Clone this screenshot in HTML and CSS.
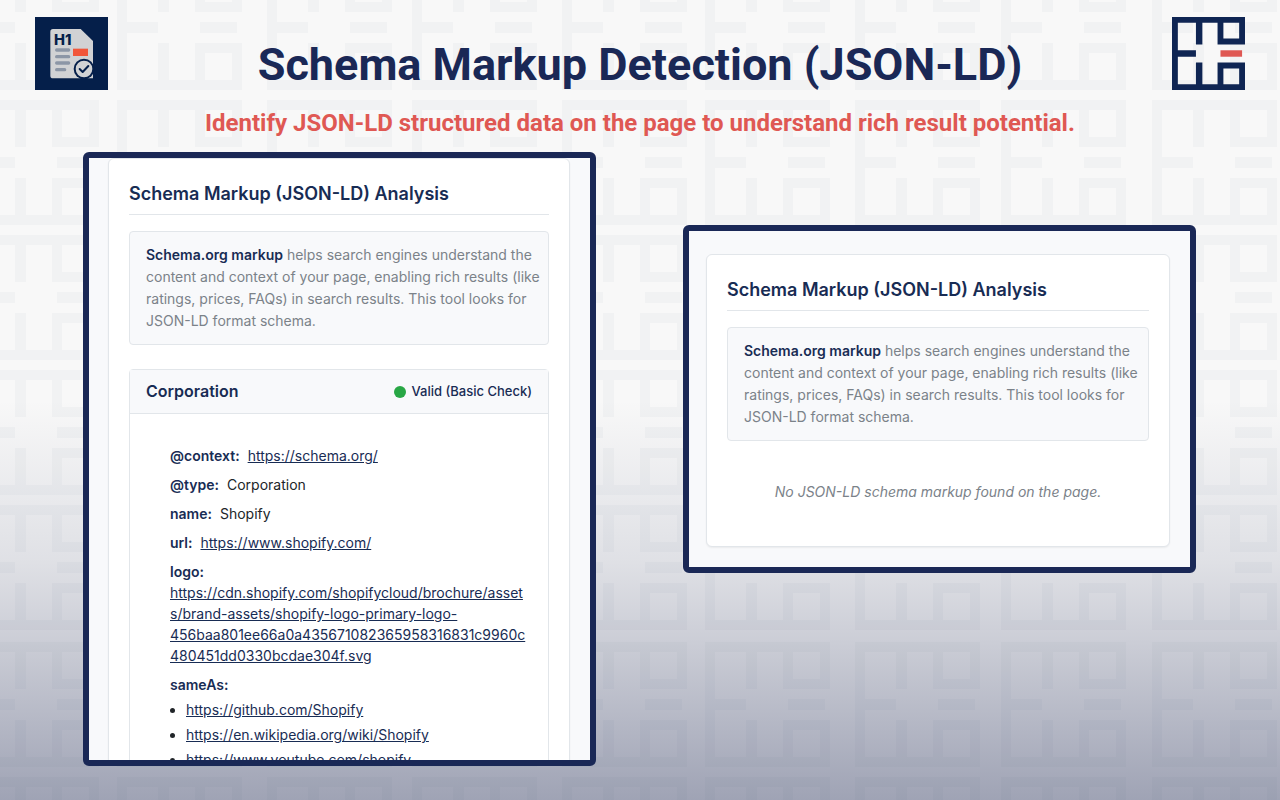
FILE: index.html
```html
<!doctype html>
<html lang="en">
    <head>
        <meta charset="UTF-8" />
        <meta name="viewport" content="width=device-width, initial-scale=1.0" />
        <title>Schema Markup Detection (JSON-LD)</title>
        <link rel="stylesheet" href="styles.css">
    </head>
    <body>
        <!-- Background pattern -->
        <svg class="backdrop" width="100%" height="100%" aria-hidden="true">
            <defs>
                <symbol id="mark" viewBox="0 0 125 125">
                    <path
                        fill-rule="evenodd"
                        d="M0 0H125V47H78V10H52V47H41V10H10V57H41V68H10V115H41V78H52V115H78V78H125V125H0ZM88 10V37H115V10ZM88 88V115H115V88Z"
                    />
                    <rect class="mark-accent" x="83" y="57" width="37" height="11" />
                </symbol>
                <pattern id="tiles" x="-26" y="-35" width="1321" height="947" patternUnits="userSpaceOnUse">
                    <g id="row">
                        <use href="#mark" x="0" width="125" height="125" />
                        <use href="#mark" x="143" width="125" height="125" />
                        <use href="#mark" x="293" width="125" height="125" />
                        <use href="#mark" x="438" width="125" height="125" />
                        <use href="#mark" x="588" width="125" height="125" />
                        <use href="#mark" x="731" width="125" height="125" />
                        <use href="#mark" x="881" width="125" height="125" />
                        <use href="#mark" x="1027" width="125" height="125" />
                        <use href="#mark" x="1178" width="125" height="125" />
                    </g>
                    <use href="#row" y="135" />
                    <use href="#row" y="270" />
                    <use href="#row" y="405" />
                    <use href="#row" y="540" />
                    <use href="#row" y="677" />
                    <use href="#row" y="812" />
                </pattern>
            </defs>
            <rect width="100%" height="100%" fill="url(#tiles)" />
        </svg>

        <header class="page-header">
            <svg class="logo" viewBox="0 0 219 219" role="img" aria-label="H1 checker">
                <rect width="219" height="219" fill="#051f4a" />
                <path d="M54 36H137L174 72V184H54Q46 184 46 176V44Q46 36 54 36Z" fill="#d1d2d4" />
                <text class="logo-text" x="57" y="84">H1</text>
                <g stroke="#8c96a6" stroke-width="10" stroke-linecap="round">
                    <path d="M65 99H101M65 119H101M65 138H101M65 158H89" />
                </g>
                <rect x="114" y="95" width="45" height="22" fill="#f1563a" />
                <circle cx="147" cy="156" r="31" fill="#051f4a" />
                <circle cx="147" cy="156" r="25" fill="#d1d2d4" />
                <path d="M134 156L143 165L160 147" fill="none" stroke="#051f4a" stroke-width="6" stroke-linecap="round" stroke-linejoin="round" />
            </svg>
            <div class="titles">
                <h1>Schema Markup Detection (JSON-LD)</h1>
                <p>Identify JSON-LD structured data on the page to understand rich result potential.</p>
            </div>
            <svg class="logo brand" role="img" aria-label="Brand">
                <use href="#mark" width="100%" height="100%" />
            </svg>
        </header>

        <main class="screens">
            <section class="screen screen-result">
                <div class="card">
                    <h2>Schema Markup (JSON-LD) Analysis</h2>
                    <p class="info">
                        <strong>Schema.org markup</strong> helps search engines
                        understand the content and context of your page,
                        enabling rich results (like ratings, prices, FAQs) in
                        search results. This tool looks for JSON-LD format
                        schema.
                    </p>
                    <div class="schema">
                        <div class="schema-header">
                            <h3>Corporation</h3>
                            <span class="status">Valid (Basic Check)</span>
                        </div>
                        <div class="schema-body">
                            <div class="prop"><strong>@context:</strong> <a href="https://schema.org/">https://schema.org/</a></div>
                            <div class="prop"><strong>@type:</strong> <span>Corporation</span></div>
                            <div class="prop"><strong>name:</strong> <span>Shopify</span></div>
                            <div class="prop"><strong>url:</strong> <a href="https://www.shopify.com/">https://www.shopify.com/</a></div>
                            <div class="prop"><strong>logo:</strong> <a href="https://cdn.shopify.com/shopifycloud/brochure/assets/brand-assets/shopify-logo-primary-logo-456baa801ee66a0a435671082365958316831c9960c480451dd0330bcdae304f.svg">https://cdn.shopify.com/shopifycloud/brochure/assets/brand-assets/shopify-logo-primary-logo-456baa801ee66a0a435671082365958316831c9960c480451dd0330bcdae304f.svg</a></div>
                            <div class="prop">
                                <strong>sameAs:</strong>
                                <ul>
                                    <li><a href="https://github.com/Shopify">https://github.com/Shopify</a></li>
                                    <li><a href="https://en.wikipedia.org/wiki/Shopify">https://en.wikipedia.org/wiki/Shopify</a></li>
                                    <li><a href="https://www.youtube.com/shopify">https://www.youtube.com/shopify</a></li>
                                </ul>
                            </div>
                        </div>
                    </div>
                </div>
            </section>

            <section class="screen screen-empty">
                <div class="card">
                    <h2>Schema Markup (JSON-LD) Analysis</h2>
                    <p class="info">
                        <strong>Schema.org markup</strong> helps search engines
                        understand the content and context of your page,
                        enabling rich results (like ratings, prices, FAQs) in
                        search results. This tool looks for JSON-LD format
                        schema.
                    </p>
                    <p class="empty">No JSON-LD schema markup found on the page.</p>
                </div>
            </section>
        </main>
    </body>
</html>
```

FILE: styles.css
```css
:root {
    --navy: #1a2856;
    --heading: #182c54;
    --coral: #df5853;
    --text: #212529;
    --muted: #7b8289;
    --border: #e2e6ea;
    --panel: #f8f9fb;
    --valid: #28a745;
}

* {
    box-sizing: border-box;
}

body {
    margin: 0;
    height: 100vh;
    display: flex;
    flex-direction: column;
    font-family: "Inter", sans-serif;
    font-size: 14px;
    line-height: 21px;
    color: var(--text);
    background: linear-gradient(
            to bottom,
            rgba(26, 36, 80, 0) 50%,
            rgba(26, 36, 80, 0.11) 70%,
            rgba(26, 36, 80, 0.2) 80%,
            rgba(26, 36, 80, 0.4) 100%
        )
        #f8f8f8;
}

.backdrop {
    position: absolute;
    inset: 0;
    z-index: -1;
    fill: rgba(30, 70, 110, 0.03);
}

/* Header */
.page-header {
    display: flex;
    justify-content: space-between;
    padding: 17px 35px 0;
    height: 152px;
    flex-shrink: 0;
    font-family: "Roboto", sans-serif;
    text-align: center;
}

.logo {
    width: 73px;
    height: 73px;
    flex-shrink: 0;
}

.logo-text {
    font: 800 44px "Inter", sans-serif;
    fill: #051f4a;
}

.brand {
    fill: #0f2553;
}

.brand use {
    --accent: var(--coral);
}

.mark-accent {
    fill: var(--accent);
}

h1 {
    margin: 20px 0 0;
    font-size: 45px;
    line-height: 56px;
    font-weight: 700;
    color: var(--navy);
}

.titles p {
    margin: 14px 0 0;
    font-size: 24px;
    line-height: 32px;
    font-weight: 700;
    color: var(--coral);
}

/* Framed screens */
.screens {
    flex: 1;
    min-height: 0;
    display: grid;
    grid-template-columns: 1fr 1fr;
    grid-template-rows: minmax(0, 1fr);
    gap: 87px;
    padding: 0 84px 34px 83px;
}

.screen {
    border: 6px solid var(--navy);
    border-radius: 6px;
    background: var(--panel);
    overflow: hidden;
}

.screen-result {
    padding: 0 20px 0 19px;
}

.screen-empty {
    align-self: start;
    margin-top: 73px;
    padding: 23px 20px 20px 17px;
}

.card {
    padding: 20px;
    border: 1px solid var(--border);
    border-radius: 6px;
    background: #fff;
    box-shadow: 0 1px 2px rgba(0, 0, 0, 0.06);
}

h2 {
    margin: 0 0 16px;
    padding-bottom: 6px;
    border-bottom: 1px solid var(--border);
    font-size: 18px;
    line-height: 29px;
    font-weight: 600;
    color: var(--heading);
}

.info {
    margin: 0 0 24px;
    padding: 12px 4px 12px 16px;
    border: 1px solid var(--border);
    border-radius: 4px;
    background: var(--panel);
    line-height: 22px;
    color: var(--muted);
}

.info strong {
    font-weight: 600;
    color: var(--heading);
}

.empty {
    margin: 0;
    padding: 16px 0 24px;
    text-align: center;
    font-style: italic;
    color: var(--muted);
}

/* Schema block */
.schema {
    border: 1px solid var(--border);
    border-radius: 4px;
}

.schema-header {
    display: flex;
    justify-content: space-between;
    align-items: center;
    height: 44px;
    padding: 0 16px;
    border-bottom: 1px solid var(--border);
    background: var(--panel);
}

h3 {
    margin: 0;
    font-size: 16px;
    font-weight: 600;
    color: var(--heading);
}

.status {
    display: flex;
    align-items: center;
    gap: 6px;
    font-size: 13px;
    font-weight: 500;
    color: var(--heading);
}

.status::before {
    content: "";
    width: 12px;
    height: 12px;
    border-radius: 50%;
    background: var(--valid);
}

.schema-body {
    padding: 31px 20px 16px 40px;
}

.prop {
    display: flex;
    flex-wrap: wrap;
    column-gap: 8px;
    margin-bottom: 8px;
}

.prop > * {
    max-width: 100%;
}

.prop strong {
    font-weight: 600;
    color: var(--heading);
}

a {
    color: var(--heading);
    text-decoration: underline;
    overflow-wrap: break-word;
}

ul {
    width: 100%;
    margin: 4px 0 0;
    padding-left: 16px;
}

li {
    margin-bottom: 4px;
}

@media (max-width: 900px) {
    body {
        height: auto;
    }
    .screens {
        grid-template-columns: 1fr;
        grid-template-rows: auto;
        gap: 30px;
        padding: 20px;
    }
    .page-header {
        height: auto;
    }
    .screen-empty {
        margin-top: 0;
    }
}
```
